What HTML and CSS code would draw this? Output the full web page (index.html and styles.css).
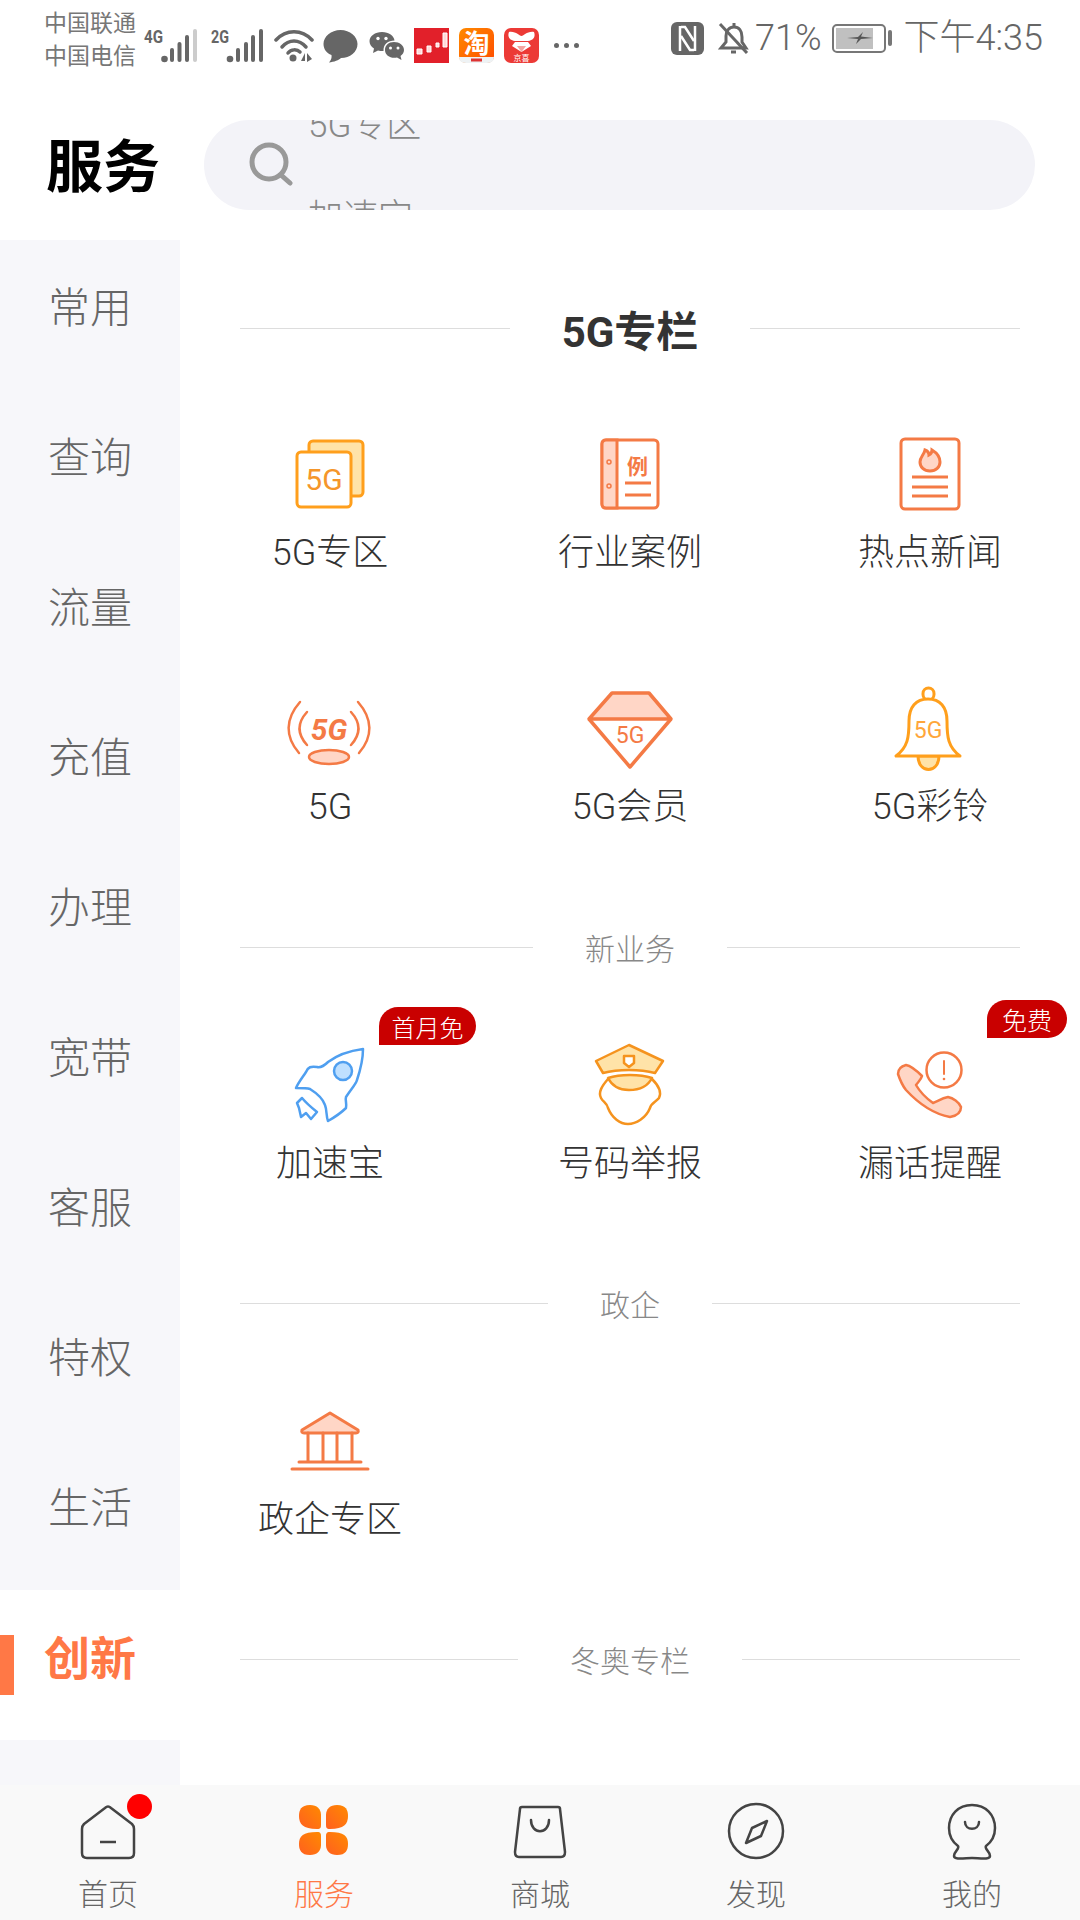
FILE: index.html
```html
<!DOCTYPE html>
<html lang="zh-CN">
  <head>
    <meta charset="UTF-8" />
    <meta name="viewport" content="width=device-width, initial-scale=1.0" />
    <title>服务</title>
    <link rel="stylesheet" href="styles.css">
  </head>
  <body>
    <div class="status-bar">
      <div class="status-left">
        <div class="carrier">中国联通<br />中国电信</div>
        <svg class="sig" width="54" height="40" viewBox="0 -4 54 40">
          <text x="1" y="15" class="sig-text" textLength="19" lengthAdjust="spacingAndGlyphs">4G</text>
          <circle cx="21.500" cy="31" r="3.300" fill="#666" />
          <rect x="27" y="20" width="4" height="14" rx="2" fill="#666" />
          <rect x="34.500" y="14" width="4" height="20" rx="2" fill="#666" />
          <rect x="42" y="7" width="4" height="27" rx="2" fill="#666" />
          <rect x="50" y="1" width="4" height="33" rx="2" fill="#ccc" />
        </svg>
        <svg class="sig sig2" width="54" height="40" viewBox="0 -4 54 40">
          <text x="1" y="15" class="sig-text" textLength="18" lengthAdjust="spacingAndGlyphs">2G</text>
          <circle cx="20" cy="31" r="3.300" fill="#666" />
          <rect x="26" y="20" width="4" height="14" rx="2" fill="#666" />
          <rect x="34" y="14" width="4" height="20" rx="2" fill="#666" />
          <rect x="41" y="7" width="4" height="27" rx="2" fill="#666" />
          <rect x="49" y="1" width="4" height="33" rx="2" fill="#666" />
        </svg>
        <svg class="wifi" width="40" height="34" viewBox="0 0 40 34" fill="none" stroke="#666" stroke-width="3.500" stroke-linecap="round">
          <path d="M2 11 C12 0 28 0 38 11" />
          <path d="M8 18 C15 10 25 10 32 18" />
          <path d="M14 24 C17 20 23 20 26 23" />
          <circle cx="19" cy="29" r="3.500" fill="#666" stroke="none" />
          <path d="M31 24 L27 32 H31Z M33 24 V33 L38 30Z" fill="#666" stroke="none" />
        </svg>
        <svg class="chat" width="35" height="34" viewBox="0 0 35 34">
          <path d="M17.500 1 C27 1 34.500 7.500 34.500 15 C34.500 23 27 29 18 29 C16 31 11 33 6 33.500 C8 31 9 29 8.500 26 C3.500 24 .5 20 .5 15 C.5 7.500 8 1 17.500 1Z" fill="#666" />
        </svg>
        <svg class="wechat" width="35" height="30" viewBox="0 0 35 30">
          <path d="M13 1 C20 1 25 5 25.500 9.500 C19 9.500 14 13.500 14.500 20 C12 20 10.500 20 9 19.500 L4 22 L5 17.500 C2 15.500 .5 13 .5 10 C.5 5 6 1 13 1Z" fill="#666" />
          <path d="M25 11 C30.500 11 35 14.500 35 19 C35 21.500 33.500 23.500 31.500 25 L32.500 29 L28 26.500 C22 28 16 24.500 16 19 C16 14.500 19.500 11 25 11Z" fill="#666" />
          <circle cx="9" cy="7.500" r="1.700" fill="#fff" /><circle cx="17" cy="7.500" r="1.700" fill="#fff" />
          <circle cx="21.500" cy="17" r="1.500" fill="#fff" /><circle cx="29" cy="17" r="1.500" fill="#fff" />
        </svg>
        <svg class="app app-first" width="35" height="35" viewBox="0 0 35 35">
          <rect width="35" height="35" fill="#e2202a" />
          <path d="M3 21 H8 V26 H3Z M13 18 H17 V24 H13Z M22 15 H25 V19 H22Z M29 5 H33 V19 H29Z" fill="#ffd9d9" stroke="#fff" stroke-width="1" />
        </svg>
        <svg class="app" width="35" height="35" viewBox="0 0 35 35">
          <defs>
            <linearGradient id="tao" x1="0" y1="0" x2="1" y2="1">
              <stop offset="0" stop-color="#ff8a00" />
              <stop offset="1" stop-color="#ff4c00" />
            </linearGradient>
          </defs>
          <rect width="35" height="35" rx="7" fill="url(#tao)" />
          <path d="M0 29 H35 V29 Q35 35 28 35 H7 Q0 35 0 29Z" fill="#eef2f4" />
          <rect x="12" y="30.500" width="11" height="3" fill="#d33" />
          <text x="17.500" y="25" class="app-text">淘</text>
        </svg>
        <svg class="app" width="35" height="35" viewBox="0 0 35 35">
          <rect width="35" height="35" rx="7" fill="#ec3a36" />
          <path d="M5 4 C12 3 15 8 17.500 8 C20 8 23 3 30 4 C32 9 29 13 22 13 H13 C6 13 3 9 5 4Z M11 14 H24 L27 18 L17.500 24 L8 18Z" fill="#fff" />
          <path d="M13 18 H22 L17.500 24Z" fill="#f5a5a0" />
          <text x="17.500" y="33" class="app-small">京喜</text>
        </svg>
        <div class="more"><i></i><i></i><i></i></div>
      </div>
      <div class="status-right">
        <svg width="33" height="33" viewBox="0 0 33 33">
          <rect width="33" height="33" rx="6" fill="#666" />
          <path d="M9 4 V29 M24 4 V29" fill="none" stroke="#fff" stroke-width="2.500" />
          <path d="M10 5 H14 L23 19 M23 28 H19 L10 14" fill="none" stroke="#fff" stroke-width="2.500" />
        </svg>
        <svg class="bell-off" width="31" height="33" viewBox="0 0 31 33" fill="none" stroke="#666" stroke-width="3">
          <path d="M8 14 C8 9 11 5 16 5 C21 5 24 9 24 15 L24 20 L28 26 H3 L8 20Z" />
          <path d="M16 1 V4" />
          <path d="M13 30 H18" />
          <path d="M2 2 L29 31" />
        </svg>
        <span class="batt-num">71%</span>
        <div class="battery"><div class="batt-fill"><svg width="26" height="12" viewBox="0 0 26 12"><path d="M0 6 L11 5 L16 0 L14 4.500 L26 6 L14 7 L9 12 L11 7Z" fill="#555" /></svg></div></div>
        <div class="batt-nub"></div>
        <span class="clock">下午4:35</span>
      </div>
    </div>

    <div class="header">
      <div class="page-title">服务</div>
      <div class="search">
        <svg class="search-icon" width="44" height="44" viewBox="0 0 44 44" fill="none" stroke="#999" stroke-width="5" stroke-linecap="round">
          <circle cx="20" cy="20" r="17" />
          <path d="M32 33 L41 41" />
        </svg>
        <div class="hints">
          <div>5G专区</div>
          <div>加速宝</div>
        </div>
      </div>
    </div>

    <div class="main">
      <div class="sidebar">
        <div class="side-item">常用</div>
        <div class="side-item">查询</div>
        <div class="side-item">流量</div>
        <div class="side-item">充值</div>
        <div class="side-item">办理</div>
        <div class="side-item">宽带</div>
        <div class="side-item">客服</div>
        <div class="side-item">特权</div>
        <div class="side-item">生活</div>
        <div class="side-item active">创新</div>
        <div class="side-item"></div>
      </div>

      <div class="content">
        <div class="sec-title strong"><span>5G专栏</span></div>
        <div class="grid grid-first">
          <div class="item">
            <svg class="ico" viewBox="0 0 100 100">
              <rect x="29" y="16" width="54" height="55" rx="4" fill="#ffe3a8" stroke="#ff9f1c" stroke-width="3" />
              <rect x="17" y="27" width="54" height="55" rx="4" fill="#fff" stroke="#ff9f1c" stroke-width="3" />
              <text x="44" y="65" class="ico-text" font-size="30" fill="#f5962a">5G</text>
            </svg>
            <div class="label">5G专区</div>
          </div>
          <div class="item">
            <svg class="ico" viewBox="0 0 100 100" fill="none" stroke="#f47a45" stroke-width="3">
              <rect x="22" y="15" width="56" height="68" rx="4" fill="#fff" />
              <path d="M26 15 H37 V83 H26 Q22 83 22 79 V19 Q22 15 26 15Z" fill="#ffd6c6" />
              <circle cx="29" cy="37" r="2" stroke-width="1.500" />
              <circle cx="29" cy="61" r="2" stroke-width="1.500" />
              <text x="57.500" y="49" class="ico-cjk" font-size="21" font-weight="700" fill="#f47a45" stroke="none">例</text>
              <path d="M45 58 H71 M45 70 H71" />
            </svg>
            <div class="label">行业案例</div>
          </div>
          <div class="item">
            <svg class="ico" viewBox="0 0 100 100" fill="none" stroke="#f47a45" stroke-width="3">
              <rect x="21" y="14" width="58" height="70" rx="4" />
              <path d="M50 46 C44 46 40 42 40 37 C40 32 44 30 45 25 C48 26 49 28 49 30 C51 29 52 27 52 25 C57 28 60 32 60 37 C60 42 56 46 50 46Z" fill="#ffd6c6" />
              <path d="M32 52 H68 M32 62 H68 M32 71 H68" />
            </svg>
            <div class="label">热点新闻</div>
          </div>
        </div>
        <div class="grid grid-next">
          <div class="item">
            <svg class="ico" viewBox="0 0 100 100" fill="none" stroke="#f47a45" stroke-width="2.500" stroke-linecap="round">
              <path d="M20 23 C5 40 5 58 19 74 M27 33 C17 44 17 55 27 66 M78 23 C93 40 93 58 79 74 M71 33 C81 44 81 55 71 66" />
              <text x="49" y="61" class="ico-text" font-size="30" font-weight="700" font-style="italic" fill="#f47a45" stroke="none">5G</text>
              <ellipse cx="49" cy="78" rx="20" ry="7" fill="#ffd6c6" />
            </svg>
            <div class="label">5G</div>
          </div>
          <div class="item">
            <svg class="ico" viewBox="0 0 100 100" fill="none" stroke="#f47a45" stroke-width="3.500" stroke-linejoin="round">
              <path d="M32 14 H69 L91 40 H9Z" fill="#ffd6c6" />
              <path d="M9 40 L50 88 L91 40" />
              <text x="50" y="64" class="ico-text" font-size="23" fill="#f47a45" stroke="none">5G</text>
            </svg>
            <div class="label">5G会员</div>
          </div>
          <div class="item">
            <svg class="ico" viewBox="0 0 100 100" fill="none" stroke="#ff9f1c" stroke-width="3" stroke-linejoin="round">
              <rect x="43" y="9" width="11" height="12" rx="5.500" />
              <path d="M38 77 C38 95 59 95 59 77Z" fill="#ffe3a8" />
              <path d="M48 20 C36 20 29 28 29 42 C29 58 28 68 16 77 H80 C68 68 67 58 67 42 C67 28 60 20 48 20Z" fill="#fff" />
              <text x="48" y="59" class="ico-text" font-size="23" fill="#ffa63a" stroke="none">5G</text>
            </svg>
            <div class="label">5G彩铃</div>
          </div>
        </div>

        <div class="sec-title"><span>新业务</span></div>
        <div class="grid grid-after">
          <div class="item">
            <div class="tag tag-month">首月免</div>
            <svg class="ico" viewBox="0 0 100 100" fill="none" stroke="#4f9ff0" stroke-width="2.500" stroke-linejoin="round">
              <path d="M83 13 C68 15 56 20 48 26 C44 30 41 32 37 31 C31 30 28 31 26 36 C22 42 18 47 16 52 C22 52 27 52 30 53 C38 58 43 63 45 69 C47 74 46 80 48 85 C55 81 61 77 66 72 C67 68 65 64 66 61 C72 52 76 48 77 44 C81 32 83 22 83 13Z" />
              <circle cx="63" cy="35" r="9" fill="#bfe0ff" />
              <path d="M17 67 L22 62 C27 68 32 72 37 76 L31 83 L26 77 L21 81 L19 72Z" />
            </svg>
            <div class="label">加速宝</div>
          </div>
          <div class="item">
            <svg class="ico" viewBox="0 0 100 100" fill="none" stroke="#f5931e" stroke-width="2.500" stroke-linejoin="round">
              <path d="M49 9 L83 25 L75 37 C60 33 38 33 23 37 L16 25Z" fill="#ffe3a8" />
              <path d="M44 20 H54 V27 L49 31 L44 27Z" fill="#fff" />
              <path d="M28 42 C40 38 60 38 72 42 C68 50 60 54 49 54 C38 54 32 50 28 42Z" fill="#ffe3a8" />
              <path d="M28 43 C22 50 18 56 21 62 C23 66 27 67 28 72 C32 82 40 88 48 88 C56 88 66 82 70 72 C71 67 76 66 79 62 C82 56 78 49 72 43" />
            </svg>
            <div class="label">号码举报</div>
          </div>
          <div class="item">
            <div class="tag tag-free">免费</div>
            <svg class="ico" viewBox="0 0 100 100" fill="none" stroke="#f47a45" stroke-width="2.500" stroke-linejoin="round">
              <path d="M26 29 C22 30 18 33 18 38 C20 44 22 49 26 54 C38 67 54 78 70 81 C76 80 81 77 81 71 C79 66 73 62 68 61 C62 62 58 65 53 67 C46 62 40 56 36 49 C38 46 41 44 42 40 C38 36 32 30 26 29Z" fill="#ffd6c6" />
              <circle cx="64" cy="34" r="17.500" fill="#fff" />
              <path d="M64 25 V38" stroke-width="2" stroke-linecap="round" />
              <circle cx="64" cy="43" r="1.300" fill="#f47a45" stroke="none" />
            </svg>
            <div class="label">漏话提醒</div>
          </div>
        </div>

        <div class="sec-title"><span>政企</span></div>
        <div class="grid grid-after">
          <div class="item">
            <svg class="ico" viewBox="0 0 100 100" fill="none" stroke="#f47a45" stroke-width="3" stroke-linecap="round" stroke-linejoin="round">
              <path d="M50 21 L78 38 Q79 41 76 41 H24 Q21 41 22 38Z" fill="#ffd6c6" />
              <path d="M28 41 V70 M43 41 V70 M57 41 V70 M72 41 V70 M19 70 H81 M12 77 H88" />
            </svg>
            <div class="label">政企专区</div>
          </div>
        </div>

        <div class="sec-title"><span>冬奥专栏</span></div>
      </div>
    </div>

    <div class="tabbar">
      <div class="tab">
        <span class="dot"></span>
        <svg class="tab-ico" viewBox="0 0 70 62" fill="none" stroke="#444" stroke-width="2.500" stroke-linejoin="round">
          <path d="M32 8 Q35 5 38 8 L59 24 Q61 26 61 29 V53 Q61 58 56 58 H14 Q9 58 9 53 V29 Q9 26 11 24Z" />
          <path d="M27 42 H43" />
        </svg>
        <div class="tab-label">首页</div>
      </div>
      <div class="tab on">
        <svg class="tab-ico" viewBox="0 0 70 62">
          <defs>
            <linearGradient id="petal" x1="0" y1="1" x2="1" y2="0">
              <stop offset="0" stop-color="#ff5f20" />
              <stop offset="1" stop-color="#ff8a00" />
            </linearGradient>
          </defs>
          <g fill="url(#petal)">
            <path d="M21 5 C12 5 10 10 10 16 C10 24 14 29 28 29 C32 29 32 27 32 24 V15 C32 9 28 5 21 5Z" />
            <path d="M48 5 C57 5 59 10 59 16 C59 24 55 29 41 29 C37 29 37 27 37 24 V15 C37 9 41 5 48 5Z" />
            <path d="M21 55 C12 55 10 50 10 44 C10 36 14 32 28 32 C32 32 32 34 32 37 V45 C32 51 28 55 21 55Z" />
            <path d="M48 55 C57 55 59 50 59 44 C59 36 55 32 41 32 C37 32 37 34 37 37 V45 C37 51 41 55 48 55Z" />
          </g>
        </svg>
        <div class="tab-label">服务</div>
      </div>
      <div class="tab">
        <svg class="tab-ico" viewBox="0 0 70 62" fill="none" stroke="#444" stroke-width="2.500" stroke-linecap="round" stroke-linejoin="round">
          <path d="M17 7 H53 Q55 7 55 9 L60 52 Q60 57 56 57 H14 Q10 57 10 52 L15 9 Q15 7 17 7Z" />
          <path d="M26 20 C26 35 44 35 44 20" />
        </svg>
        <div class="tab-label">商城</div>
      </div>
      <div class="tab">
        <svg class="tab-ico" viewBox="0 0 70 62" fill="none" stroke="#444" stroke-width="2.500" stroke-linejoin="round">
          <circle cx="35" cy="31" r="27" />
          <path d="M46 21 L40 36 L25 43 L31 28Z" />
        </svg>
        <div class="tab-label">发现</div>
      </div>
      <div class="tab">
        <svg class="tab-ico" viewBox="0 0 70 62" fill="none" stroke="#444" stroke-width="2.500" stroke-linecap="round" stroke-linejoin="round">
          <path d="M35 5 C49 5 58 15 58 28 C58 38 53 43 49 46 C47 49 53 51 53 56 C53 60 42 58 35 58 C28 58 17 60 17 56 C17 51 23 49 21 46 C17 43 12 38 12 28 C12 15 21 5 35 5Z" />
          <path d="M28 22 C28 31 42 31 42 22" />
        </svg>
        <div class="tab-label">我的</div>
      </div>
    </div>
  </body>
</html>
```

FILE: styles.css
```css
* {
  box-sizing: border-box;
  font-family: Roboto, "Noto Sans CJK SC", sans-serif;
}

html,
body {
  margin: 0;
  height: 100%;
}

body {
  width: 1080px;
  height: 1920px;
  display: flex;
  flex-direction: column;
  overflow: hidden;
  background-color: #fff;
  color: #333;
}

/* status bar */
.status-bar {
  height: 120px;
  flex-shrink: 0;
  display: flex;
  justify-content: space-between;
  align-items: flex-start;
  padding: 18px 37px 0 44px;
  color: #666;
}

.status-left,
.status-right {
  display: flex;
  align-items: center;
}

.status-right {
  margin-top: 2px;
  font-size: 36px;
  font-weight: 300;
  line-height: 36px;
}

.carrier {
  font-size: 23px;
  line-height: 33px;
  color: #777;
  margin-top: -11px;
  width: 99px;
}

.sig {
  margin-top: -4px;
}

.sig-text {
  font-size: 19px;
  font-weight: 700;
  fill: #666;
}

.sig2 {
  margin-left: 13px;
}

.wifi {
  margin-left: 10px;
}

.chat {
  margin-left: 9px;
}

.wechat {
  margin-left: 11px;
}

.app {
  margin-left: 10px;
}

.app-first {
  margin-left: 10px;
}

.app-text {
  font-size: 26px;
  font-weight: 700;
  fill: #fff;
  text-anchor: middle;
}

.app-small {
  font-size: 8px;
  fill: #fff;
  text-anchor: middle;
}

.more {
  display: flex;
  gap: 5px;
  margin-left: 15px;
}

.more i {
  width: 5px;
  height: 5px;
  border-radius: 50%;
  background-color: #666;
}

.bell-off {
  margin-left: 14px;
}

.batt-num {
  margin-left: 6px;
}

.battery {
  width: 54px;
  height: 29px;
  margin-left: 10px;
  padding: 2px;
  border: 2px solid #777;
  border-radius: 5px;
}

.batt-fill {
  width: 37px;
  height: 100%;
  background-color: #c0c0c0;
  display: flex;
  align-items: center;
  justify-content: flex-end;
}

.batt-nub {
  width: 4px;
  height: 16px;
  margin-left: 2px;
  border-radius: 2px;
  background-color: #777;
}

.clock {
  margin-left: 12px;
}

/* title row */
.header {
  height: 120px;
  flex-shrink: 0;
  display: flex;
  align-items: center;
  padding: 0 45px 30px 46px;
}

.page-title {
  width: 158px;
  font-size: 57px;
  font-weight: 700;
  color: #000;
  position: relative;
  top: -3px;
}

.search {
  flex: 1;
  height: 90px;
  display: flex;
  align-items: flex-start;
  padding-left: 45px;
  border-radius: 45px;
  overflow: hidden;
  background-color: #f3f3f8;
}

.search-icon {
  flex-shrink: 0;
  margin: 22px 15px 0 0;
}

.hints {
  margin-top: -40px;
  font-size: 35px;
  font-weight: 300;
  line-height: 92px;
  color: #888;
}

/* sidebar and content */
.main {
  flex: 1;
  min-height: 0;
  display: flex;
  overflow: hidden;
}

.sidebar {
  width: 180px;
  flex-shrink: 0;
  background-color: #f7f7fa;
}

.side-item {
  position: relative;
  height: 150px;
  padding-bottom: 21px;
  display: flex;
  align-items: center;
  justify-content: center;
  font-size: 42px;
  font-weight: 300;
  color: #666;
}

.side-item.active {
  background-color: #fff;
  color: #ff7846;
  font-size: 46px;
  font-weight: 700;
}

.side-item.active::before {
  content: "";
  position: absolute;
  left: 0;
  top: 45px;
  width: 14px;
  height: 60px;
  background-color: #ff7846;
}

.content {
  flex: 1;
  min-width: 0;
  padding-top: 58px;
}

.sec-title {
  height: 60px;
  margin: 85px 60px 0;
  display: flex;
  align-items: center;
  gap: 52px;
  font-size: 30px;
  font-weight: 300;
  color: #888;
}

.sec-title:first-child {
  margin-top: 0;
}

.sec-title::before,
.sec-title::after {
  content: "";
  flex: 1;
  height: 1px;
  background-color: #ddd;
}

.sec-title.strong {
  font-size: 42px;
  font-weight: 700;
  color: #333;
}

.grid {
  display: grid;
  grid-template-columns: repeat(3, 1fr);
}

.grid-first {
  margin-top: 67px;
}

.grid-next {
  margin-top: 102px;
  margin-bottom: 86px;
}

.grid-after {
  margin-top: 59px;
}

.item {
  position: relative;
  display: flex;
  flex-direction: column;
  align-items: center;
}

.ico {
  width: 100px;
  height: 100px;
}

.ico-text {
  font-family: Roboto, sans-serif;
  text-anchor: middle;
}

.ico-cjk {
  font-family: "Noto Sans CJK SC", sans-serif;
  text-anchor: middle;
}

.label {
  margin-top: 4px;
  font-size: 36px;
  font-weight: 300;
  line-height: 48px;
  color: #333;
}

.tag {
  position: absolute;
  height: 38px;
  border-radius: 19px 19px 19px 0;
  display: flex;
  align-items: center;
  justify-content: center;
  font-size: 24px;
  font-weight: 300;
  color: #fff;
  background-color: #c90000;
}

.tag-month {
  top: -29px;
  right: 4px;
  width: 97px;
}

.tag-free {
  top: -36px;
  right: 13px;
  width: 80px;
  font-size: 25px;
}

/* bottom tabs */
.tabbar {
  height: 135px;
  flex-shrink: 0;
  display: grid;
  grid-template-columns: repeat(5, 1fr);
  background-color: #f9f9f9;
}

.tab {
  position: relative;
  display: flex;
  flex-direction: column;
  align-items: center;
  padding-top: 15px;
}

.tab-ico {
  width: 70px;
  height: 62px;
}

.tab-label {
  margin-top: 13px;
  font-size: 30px;
  font-weight: 300;
  line-height: 40px;
  color: #666;
}

.tab.on .tab-label {
  color: #ff7846;
}

.dot {
  position: absolute;
  top: 9px;
  left: 127px;
  width: 25px;
  height: 25px;
  border-radius: 50%;
  background-color: #f00;
}
```
